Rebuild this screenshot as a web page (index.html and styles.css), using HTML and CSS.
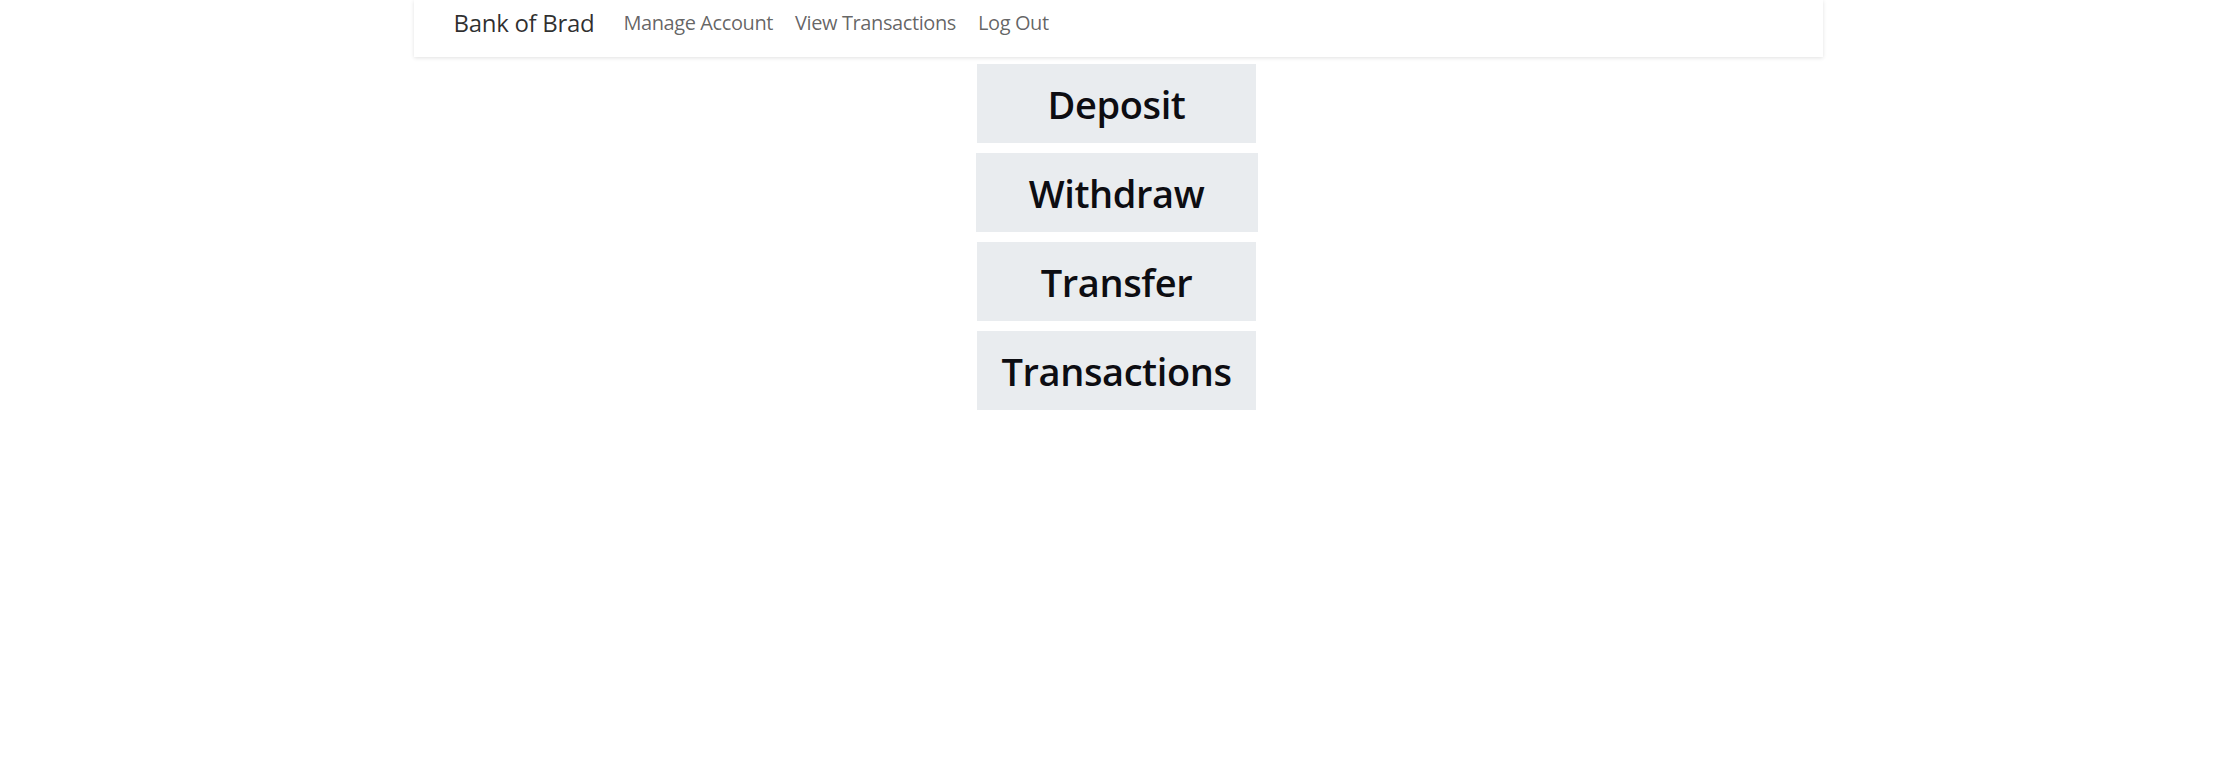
FILE: index.html
```html
<!DOCTYPE html>
<html lang="en">
<head>
<meta charset="utf-8">
<title>Bank of Brad</title>
<link rel="stylesheet" href="styles.css">
</head>
<body>
<nav class="navbar">
  <a class="brand" href="#">Bank of Brad</a>
  <ul class="nav">
    <li><a class="nav-link" href="#">Manage Account</a></li>
    <li><a class="nav-link" href="#">View Transactions</a></li>
    <li><a class="nav-link" href="#">Log Out</a></li>
  </ul>
</nav>
<main class="actions">
  <a class="action" href="#">Deposit</a>
  <a class="action action-wide" href="#">Withdraw</a>
  <a class="action" href="#">Transfer</a>
  <a class="action" href="#">Transactions</a>
</main>
</body>
</html>
```

FILE: styles.css
```css
html, body {
  margin: 0;
  padding: 0;
  background: #ffffff;
}

body {
  font-family: "Open Sans", "Noto Sans", "Liberation Sans", sans-serif;
  color: #212529;
}

a {
  text-decoration: none;
}

.navbar {
  width: 1409px;
  height: 57px;
  margin: 0 auto;
  box-sizing: border-box;
  padding: 0 0 13px 40px;
  display: flex;
  align-items: center;
  background: #fff;
  box-shadow: 0 1px 4px rgba(0, 0, 0, 0.12);
}

.brand {
  font-size: 24px;
  color: rgba(0, 0, 0, 0.82);
  margin-right: 18px;
  letter-spacing: -0.3px;
}

.nav {
  list-style: none;
  display: flex;
  margin: 0;
  padding: 0;
}

.nav-link {
  display: block;
  padding: 0 11px;
  font-size: 20px;
  color: rgba(0, 0, 0, 0.62);
  letter-spacing: -0.4px;
}

.actions {
  display: flex;
  flex-direction: column;
  align-items: center;
  gap: 10px;
  padding: 7px 3px 0 0;
}

.action {
  width: 279px;
  height: 79px;
  display: flex;
  align-items: center;
  justify-content: center;
  background: #e9ecef;
  color: #0d0d12;
  font-size: 38px;
  font-weight: 600;
  letter-spacing: -0.4px;
}

.action-wide {
  width: 282px;
}
```
